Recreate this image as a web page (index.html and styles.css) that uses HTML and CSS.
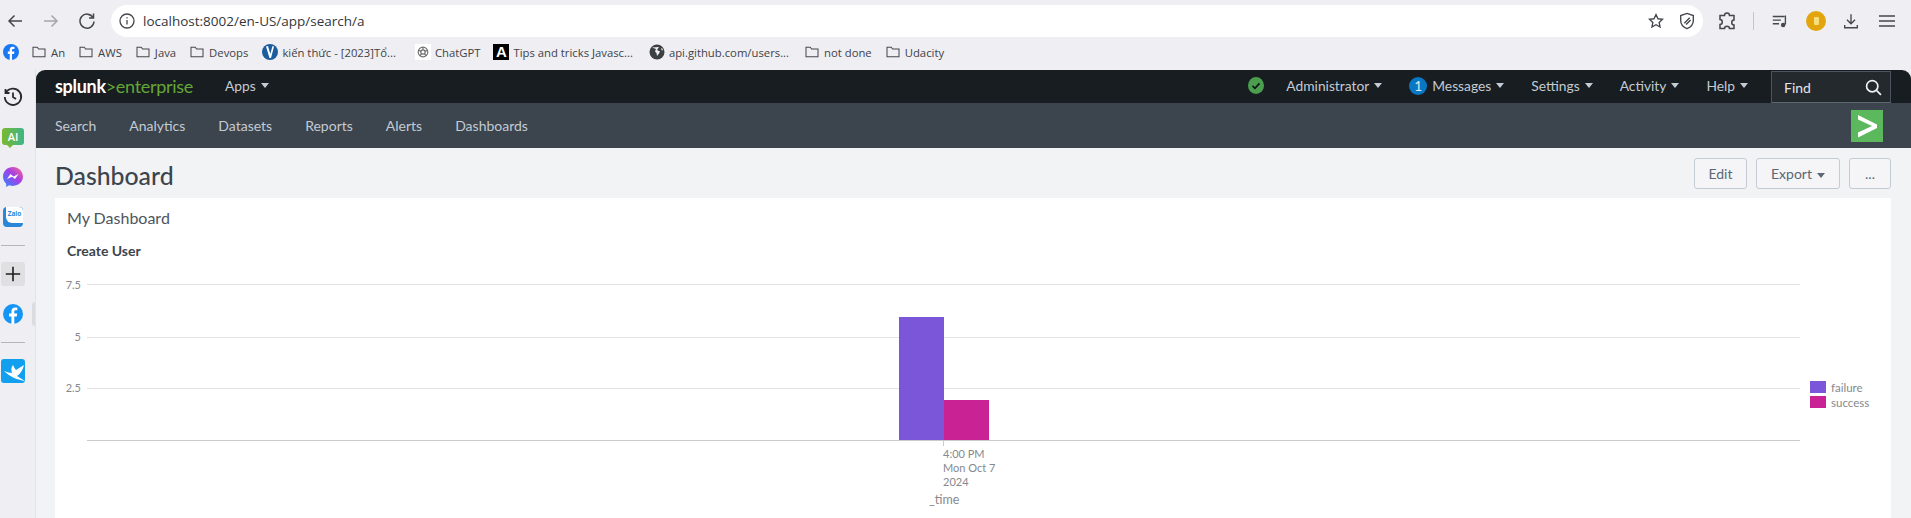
FILE: index.html
```html
<!DOCTYPE html>
<html lang="en">
<head>
    <meta charset="UTF-8">
    <title>Dashboard | Splunk</title>
    <link rel="stylesheet" href="styles.css">
</head>
<body>
<!-- browser toolbar -->
<div class="toolbar">
    <div class="navBtns">
        <svg class="tbIcon" viewBox="0 0 20 20"><path d="M17 10H4M9.5 4.5 4 10l5.500 5.500"/></svg>
        <svg class="tbIcon faded" viewBox="0 0 20 20"><path d="M3 10h13M10.500 4.500 16 10l-5.500 5.500"/></svg>
        <svg class="tbIcon" viewBox="0 0 20 20"><path d="M16 6.500A7 7 0 1 0 17 10.500M16.500 2.500v4.500H12"/></svg>
    </div>
    <div class="omnibox">
        <svg class="infoIcon" viewBox="0 0 16 16"><circle cx="8" cy="8" r="7"/><path d="M8 7v4.500M8 4.200v1.300"/></svg>
        <span class="url">localhost:8002/en-US/app/search/a</span>
        <svg class="tbIcon starIcon" viewBox="0 0 20 20"><path d="M10 2.800l2.200 4.700 5 .6-3.700 3.500 1 5.100-4.500-2.600-4.500 2.600 1-5.100-3.700-3.500 5-.6z"/></svg>
        <svg class="tbIcon shieldIcon" viewBox="0 0 20 20"><path d="M10 1.500l7 2.500v5.500c0 4.500-3 7.500-7 9-4-1.500-7-4.500-7-9V4zM7 12.500l6-6M9 14l5-5"/></svg>
    </div>
    <div class="tbRight">
        <svg class="tbIcon puzzle" viewBox="0 0 20 20"><path d="M7.500 4.500c0-3.500 5-3.500 5 0h4.500v4.500c-3 0-3 5 0 5v3.500h-4.500c0-3-5-3-5 0H3v-4c3 0 3-5 0-5V4.500z"/></svg>
        <span class="tbSep"></span>
        <svg class="tbIcon queue" viewBox="0 0 20 20"><path d="M2 5h13M2 9h9M2 13h7M16 4v10"/><circle class="solid" cx="13.500" cy="14.500" r="2.500"/></svg>
        <span class="avatar"><span class="avatarMark"></span></span>
        <svg class="tbIcon download" viewBox="0 0 20 20"><path d="M10 2.500v10M5.500 8.500l4.500 4.500 4.500-4.500M3 14.500v3h14v-3"/></svg>
        <svg class="tbIcon burger" viewBox="0 0 16 12"><path d="M0 1h16M0 6h16M0 11h16"/></svg>
    </div>
</div>

<!-- bookmarks -->
<div class="bookmarks">
    <svg class="bmIcon fbIcon" viewBox="0 0 20 20"><circle cx="10" cy="10" r="10" fill="#1877f2"/><path d="M11.300 20v-7.500h2.500l.4-3h-2.900V7.800c0-.9.3-1.500 1.500-1.500h1.500V3.600c-.7-.1-1.400-.1-2.200-.1-2.200 0-3.700 1.300-3.700 3.800v2.200H6v3h2.400V20z" fill="#fff"/></svg>
    <a class="bm first"><svg class="folder" viewBox="0 0 16 14"><path d="M1 12.500V1.500h5l1.500 2h7.500v9z"/></svg>An</a>
    <a class="bm"><svg class="folder" viewBox="0 0 16 14"><path d="M1 12.500V1.500h5l1.500 2h7.500v9z"/></svg>AWS</a>
    <a class="bm"><svg class="folder" viewBox="0 0 16 14"><path d="M1 12.500V1.500h5l1.500 2h7.500v9z"/></svg>Java</a>
    <a class="bm"><svg class="folder" viewBox="0 0 16 14"><path d="M1 12.500V1.500h5l1.500 2h7.500v9z"/></svg>Devops</a>
    <a class="bm viblo"><svg class="bmIcon" viewBox="0 0 16 16"><circle cx="8" cy="8" r="8" fill="#1d5b9f"/><path d="M4 2.500 7.500 14h1.500L12 2.500 10.500 2 8.300 10 6 2z" fill="#fff"/></svg>kiến thức - [2023]Tổ...</a>
    <a class="bm chat"><span class="gptBox"><svg viewBox="0 0 16 16"><circle cx="8" cy="8" r="5.500"/><circle cx="8" cy="8" r="2.500"/><path d="M8 2.500v3M3 6l3 1.500M4.500 12.500l2-3M11.500 12.500l-2-3M13 6l-3 1.500"/></svg></span>ChatGPT</a>
    <a class="bm tips"><span class="aBox">A</span>Tips and tricks Javasc...</a>
    <a class="bm gh"><svg class="bmIcon" viewBox="0 0 16 16"><circle cx="8" cy="8" r="7.500" fill="#3c4043"/><path d="M3 3.500 7 5 6 7.500 7.500 9l.5 3 2-2.500 1-2-3-1.500 2-3zM12 4l2 1-1 2z" fill="#eeeef3"/></svg>api.github.com/users...</a>
    <a class="bm gh"><svg class="folder" viewBox="0 0 16 14"><path d="M1 12.500V1.500h5l1.500 2h7.500v9z"/></svg>not done</a>
    <a class="bm"><svg class="folder" viewBox="0 0 16 14"><path d="M1 12.500V1.500h5l1.500 2h7.500v9z"/></svg>Udacity</a>
</div>

<div class="browserBody">
    <!-- browser sidebar -->
    <div class="sidebar">
        <svg class="sideIcon history" viewBox="0 0 20 20"><path d="M3 5.500A8.200 8.200 0 1 1 1.800 10M2.500 2v4h4M10 5.500V10l3 2"/></svg>
        <span class="aiIcon">AI</span>
        <svg class="sideIcon messenger" viewBox="0 0 20 20"><defs><linearGradient id="msGrad" x1="0" y1="1" x2="1" y2="0"><stop offset="0" stop-color="#2d8cff"/><stop offset=".55" stop-color="#a33ee8"/><stop offset="1" stop-color="#ff6a8a"/></linearGradient></defs><path d="M10 0C4.400 0 0 4.100 0 9.600c0 2.900 1.200 5.400 3.200 7.100V20l3-1.700c1.200.4 2.400.6 3.800.6 5.600 0 10-4.100 10-9.300S15.600 0 10 0z" fill="url(#msGrad)"/><path d="M4 12l3.500-5 3 2.500L15.500 7 12 12 9 9.700z" fill="#fff"/></svg>
        <span class="zaloIcon"><span class="zaloInner">Zalo</span></span>
        <span class="sideSep"></span>
        <span class="plusBox">
            <svg viewBox="0 0 20 20"><path d="M10 2v16M2 10h16"/></svg>
        </span>
        <svg class="sideIcon fbSide" viewBox="0 0 20 20"><circle cx="10" cy="10" r="10" fill="#1494f5"/><path d="M11.300 20v-7.500h2.500l.4-3h-2.900V7.800c0-.9.3-1.500 1.500-1.500h1.500V3.600c-.7-.1-1.400-.1-2.200-.1-2.200 0-3.700 1.300-3.700 3.800v2.200H6v3h2.400V20z" fill="#fff"/></svg>
        <span class="sideSep"></span>
        <span class="swiftBox">
            <svg viewBox="0 0 24 24"><path d="M3 12c3 1 6 2 8 2-1-3-1-6 1-8 1 2 2 4 3 5l8-5c-1 5-4 9-7 11l8 5c-7-1-15-4-21-10z" fill="#fff"/></svg>
        </span>
        <span class="sideHandle"></span>
    </div>

    <!-- splunk app -->
    <div class="app">
        <div class="topBar">
            <div class="logo"><b>splunk</b><span>&gt;enterprise</span></div>
            <a class="topItem apps">Apps<i class="caret"></i></a>
            <div class="topRight">
                <span class="okIcon"><svg viewBox="0 0 16 16"><path d="M4.500 8.300l2.500 2.500 4.500-5"/></svg></span>
                <a class="topItem">Administrator<i class="caret"></i></a>
                <a class="topItem"><span class="badge">1</span>Messages<i class="caret"></i></a>
                <a class="topItem">Settings<i class="caret"></i></a>
                <a class="topItem">Activity<i class="caret"></i></a>
                <a class="topItem">Help<i class="caret"></i></a>
                <div class="findBox">
                    <span>Find</span>
                    <svg viewBox="0 0 16 16"><circle cx="6.800" cy="6.800" r="5.300"/><path d="M10.800 10.800 15 15"/></svg>
                </div>
            </div>
        </div>
        <div class="navBar">
            <a>Search</a>
            <a>Analytics</a>
            <a>Datasets</a>
            <a>Reports</a>
            <a>Alerts</a>
            <a>Dashboards</a>
            <span class="appLogo"><svg viewBox="0 0 32 32"><path d="M7 5l19 9.500v3.500L7 27.500v-5l14-6.500L7 9.500z"/></svg></span>
        </div>

        <div class="page">
            <div class="pageHead">
                <h1>Dashboard</h1>
                <div class="pageBtns">
                    <button class="btn editBtn">Edit</button>
                    <button class="btn exportBtn">Export<i class="caret dark"></i></button>
                    <button class="btn moreBtn">...</button>
                </div>
            </div>
            <div class="panel">
                <div class="panelTitle">My Dashboard</div>
                <div class="chartTitle">Create User</div>
                <svg class="chart" viewBox="0 0 1836 250" width="1836" height="250">
                    <g class="grid">
                        <line x1="32" x2="1745" y1="6.500" y2="6.500"/>
                        <line x1="32" x2="1745" y1="59.500" y2="59.500"/>
                        <line x1="32" x2="1745" y1="110.500" y2="110.500"/>
                    </g>
                    <line class="axis" x1="32" x2="1745" y1="162.500" y2="162.500"/>
                    <line class="axis" x1="888.500" x2="888.500" y1="162" y2="168"/>
                    <rect x="844" y="39" width="45" height="123" fill="#7c56d9"/>
                    <rect x="889" y="122" width="45" height="40" fill="#c92295"/>
                    <g class="yLabels">
                        <text x="26" y="11">7.5</text>
                        <text x="26" y="63">5</text>
                        <text x="26" y="114">2.5</text>
                    </g>
                    <g class="xLabels">
                        <text x="888" y="180">4:00 PM</text>
                        <text x="888" y="194">Mon Oct 7</text>
                        <text x="888" y="208">2024</text>
                        <text class="axisTitle" x="874" y="226">_time</text>
                    </g>
                    <rect x="1755" y="103" width="16" height="12" fill="#7c56d9"/>
                    <rect x="1755" y="118" width="16" height="12" fill="#c92295"/>
                    <g class="legendText">
                        <text x="1776" y="114">failure</text>
                        <text x="1776" y="129">success</text>
                    </g>
                </svg>
            </div>
        </div>
    </div>
</div>
</body>
</html>
```

FILE: styles.css
```css
*{
    margin:0;
    padding:0;
    box-sizing:border-box;
}
html,body{
    height:518px;
    overflow:hidden;
}
body{
    background:#eeeef3;
    font-family:"Open Sans","Liberation Sans",sans-serif;
    color:#3c444d;
}
a{
    display:flex;
    align-items:center;
}

/* toolbar */
.toolbar{
    height:37px;
    padding-top:5px;
    display:flex;
}
.tbIcon{
    width:20px;
    height:20px;
    fill:none;
    stroke:#44474c;
    stroke-width:1.5;
}
.navBtns{
    width:111px;
    padding-left:5px;
    height:32px;
    display:flex;
    align-items:center;
    gap:16px;
}
.tbIcon.faded{
    stroke:#a5a7ac;
}
.omnibox{
    width:1592px;
    height:32px;
    background:#fff;
    border-radius:16px;
    display:flex;
    align-items:center;
    padding-left:8px;
}
.infoIcon{
    width:16px;
    height:16px;
    fill:none;
    stroke:#44474c;
    stroke-width:1.3;
    margin-right:8px;
}
.url{
    font-size:13.500px;
    color:#33363a;
    flex:1;
}
.starIcon{
    width:18px;
    height:18px;
    margin-right:13px;
}
.shieldIcon{
    width:18px;
    height:18px;
    margin-right:7px;
}
.tbRight{
    flex:1;
    height:32px;
    display:flex;
    align-items:center;
    padding-left:14px;
}
.tbRight .puzzle{
    margin-right:16px;
}
.tbSep{
    width:1px;
    height:18px;
    background:#c4c5c9;
    margin-right:17px;
}
.tbRight .queue{
    width:18px;
    height:18px;
    margin-right:17px;
}
.solid{
    fill:#44474c;
    stroke:none;
}
.avatar{
    width:20px;
    height:20px;
    border-radius:50%;
    background:#e3a50e;
    display:flex;
    align-items:center;
    justify-content:center;
    margin-right:16px;
}
.avatarMark{
    width:5px;
    height:8px;
    background:#f6df7a;
    border-radius:1px;
}
.tbRight .download{
    width:18px;
    height:18px;
    margin-right:19px;
}
.tbRight .burger{
    width:16px;
    height:12px;
}

/* bookmarks */
.bookmarks{
    height:32px;
    padding-bottom:2px;
    display:flex;
    align-items:center;
    padding-left:3px;
    font-size:11.300px;
    color:#3f4247;
}
.bmIcon{
    width:16px;
    height:16px;
    flex:none;
    margin-right:4px;
}
.fbIcon{
    margin-right:0;
}
.bm{
    white-space:nowrap;
    margin-left:14px;
}
.bm.first{
    margin-left:13px;
}
.folder{
    width:14px;
    height:12px;
    fill:none;
    stroke:#45484d;
    stroke-width:1.200;
    margin-right:5px;
}
.chat{
    margin-left:19px;
}
.gptBox{
    width:16px;
    height:16px;
    background:#fff;
    margin-right:4px;
    display:flex;
    align-items:center;
    justify-content:center;
}
.gptBox svg{
    width:14px;
    height:14px;
    fill:none;
    stroke:#6e6e6e;
    stroke-width:1.300;
}
.tips{
    margin-left:13px;
}
.aBox{
    width:16px;
    height:16px;
    background:#000;
    color:#fff;
    font-family:"Liberation Sans",sans-serif;
    font-weight:bold;
    font-size:15px;
    line-height:16px;
    text-align:center;
    margin-right:4px;
}
.bm.gh{
    margin-left:16px;
}

.browserBody{
    height:449px;
    display:flex;
}

/* sidebar */
.sidebar{
    width:36px;
    flex:none;
    position:relative;
    display:flex;
    flex-direction:column;
    padding-left:1px;
    border-right:1px solid #e2e2e7;
}
.sideIcon{
    display:block;
    flex:none;
}
.history{
    width:20px;
    height:20px;
    margin:18px 0 0 2px;
    fill:none;
    stroke:#2b2b2b;
    stroke-width:1.800;
}
.aiIcon{
    position:relative;
    width:22px;
    height:17px;
    margin:21px 0 0 1px;
    background:linear-gradient(90deg,#7ab82f,#3fb58a);
    border-radius:3px;
    color:#fff;
    font-size:11px;
    font-weight:600;
    line-height:17px;
    text-align:center;
    flex:none;
}
.aiIcon::after{
    content:"";
    position:absolute;
    left:5px;
    top:17px;
    border-left:3px solid transparent;
    border-right:3px solid transparent;
    border-top:3px solid #7ab82f;
}
.messenger{
    width:20px;
    height:20px;
    margin:22px 0 0 2px;
}
.zaloIcon{
    width:20px;
    height:20px;
    margin:20px 0 0 2px;
    background:#2a87d8;
    border-radius:4px;
    display:flex;
    justify-content:flex-end;
    flex:none;
    overflow:hidden;
}
.zaloInner{
    width:17px;
    height:16px;
    background:#fff;
    border-radius:0 4px 0 6px;
    color:#2a87d8;
    font-size:6.500px;
    font-weight:700;
    line-height:14px;
    text-align:center;
}
.sideSep{
    width:24px;
    height:1px;
    background:#b5b5ba;
    margin-top:18px;
    flex:none;
}
.plusBox{
    width:24px;
    height:24px;
    background:#e0e0e3;
    border-radius:3px;
    margin-top:16px;
    display:flex;
    align-items:center;
    justify-content:center;
    flex:none;
}
.plusBox svg{
    width:18px;
    height:18px;
    fill:none;
    stroke:#1f1f1f;
    stroke-width:1.800;
}
.fbSide{
    width:20px;
    height:20px;
    margin:18px 0 0 2px;
}
.swiftBox{
    width:24px;
    height:24px;
    background:#12a0ee;
    border-radius:3px;
    margin-top:16px;
    flex:none;
    overflow:hidden;
}
.swiftBox svg{
    display:block;
}
.sideHandle{
    position:absolute;
    left:32px;
    top:233px;
    width:3px;
    height:24px;
    background:#dcdce0;
    border-radius:3px 0 0 3px;
}

/* splunk */
.app{
    flex:1;
    min-width:0;
    margin-top:1px;
    background:#f2f3f5;
    border-radius:9px 9px 0 0;
    overflow:hidden;
}
.topBar{
    height:33px;
    background:#171d21;
    display:flex;
    align-items:center;
    padding-left:19px;
    color:#c3cbd4;
    font-size:14px;
}
.logo{
    width:170px;
    padding-bottom:2px;
    font-family:"Lato",sans-serif;
    font-size:18px;
    color:#65a637;
    letter-spacing:-.3px;
}
.logo b{
    color:#fff;
}
.topItem{
    white-space:nowrap;
    padding-bottom:2px;
    font-family:"Lato",sans-serif;
    font-size:13.800px;
}
.caret{
    display:inline-block;
    border-left:4px solid transparent;
    border-right:4px solid transparent;
    border-top:5px solid #c3cbd4;
    margin-left:5px;
}
.caret.dark{
    border-top-color:#5c6773;
    vertical-align:middle;
}
.topRight{
    margin-left:auto;
    display:flex;
    align-items:center;
    height:100%;
    margin-right:20px;
    gap:27px;
}
.okIcon{
    width:16px;
    height:17px;
    margin-bottom:2px;
    margin-right:-5px;
    border-radius:50%;
    background:#4a9e4d;
    display:flex;
}
.okIcon svg{
    fill:none;
    stroke:#10181a;
    stroke-width:1.800;
}
.badge{
    width:18px;
    height:18px;
    border-radius:50%;
    background:#0877c4;
    color:#dce9f3;
    text-align:center;
    line-height:18px;
    margin-right:5px;
}
.findBox{
    width:120px;
    height:32px;
    border:1px solid #4b545d;
    border-bottom-color:#5d666f;
    background:#24292d;
    display:flex;
    align-items:center;
    justify-content:space-between;
    padding:0 8px 0 12px;
    font-family:"Lato",sans-serif;
    color:#e2e6ea;
    margin-left:-4px;
    margin-top:1px;
}
.findBox svg{
    width:17px;
    height:17px;
    fill:none;
    stroke:#eef1f3;
    stroke-width:1.600;
}
.navBar{
    height:45px;
    background:#3c444d;
    display:flex;
    align-items:center;
    padding:0 28px 0 19px;
    gap:33px;
    color:#c3cbd4;
    font-family:"Lato",sans-serif;
    font-size:14px;
}
.appLogo{
    width:32px;
    height:32px;
    background:#5cb85c;
    margin-left:auto;
}
.appLogo svg{
    display:block;
    fill:#fff;
}
.page{
    padding:10px 20px 0 19px;
}
.pageHead{
    display:flex;
    align-items:center;
    justify-content:space-between;
    height:31px;
    margin-bottom:9px;
}
h1{
    padding-top:4px;
    font-family:"Lato",sans-serif;
    font-size:24.800px;
    font-weight:500;
    color:#3c444d;
}
.pageBtns{
    display:flex;
    gap:9px;
}
.btn{
    height:31px;
    background:#f5f5f7;
    border:1px solid #c3cbd4;
    border-radius:3px;
    font-family:"Lato",sans-serif;
    font-size:14px;
    color:#5c6773;
}
.editBtn{
    width:53px;
}
.exportBtn{
    width:84px;
}
.moreBtn{
    width:42px;
}
.panel{
    background:#fff;
    height:320px;
    padding:12px 0 0 12px;
}
.panelTitle{
    font-family:"Lato",sans-serif;
    font-size:16px;
    line-height:16px;
    color:#4d5560;
    padding-bottom:16px;
}
.chartTitle{
    font-family:"Lato",sans-serif;
    font-size:14px;
    font-weight:700;
    line-height:17px;
    color:#3c444d;
    margin-bottom:19px;
}
.chart{
    display:block;
    margin-left:-12px;
    font-family:"Lato",sans-serif;
    font-size:11px;
    fill:#86898e;
}
.grid line{
    stroke:#e1e3e5;
}
.axis{
    stroke:#c9cbce;
}
.yLabels text{
    text-anchor:end;
}
.legendText{
    font-size:11.500px;
}
.axisTitle{
    font-size:12.500px;
}
```
